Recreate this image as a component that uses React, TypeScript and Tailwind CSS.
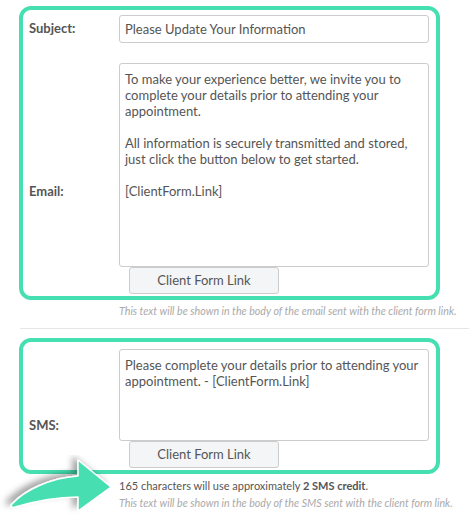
import React from "react";

const GREEN = "#46dfb1";

function FieldBox({ children, className }: { children: React.ReactNode; className?: string }) {
  return (
    <div className={"rounded-[3px] border border-[#cccccc] bg-white px-[5px] text-[13px] leading-[16px] text-[#555555] " + (className ?? "")}>
      {children}
    </div>
  );
}

function LinkButton() {
  return (
    <div className="ml-[10px] flex h-[27px] w-[150px] items-center justify-center rounded-[3px] border border-[#cccccc] bg-[#f4f5f7] text-[13px] text-[#555555]">
      Client Form Link
    </div>
  );
}

export default function App() {
  return (
    <div className="relative h-[530px] w-[469px] overflow-hidden bg-white font-['Lato','Liberation_Sans',sans-serif] text-[#555555]">
      <div className="pl-[19px] pt-[6px]">
        {/* Email box */}
        <div className="w-[421px] rounded-[12px] border-4 border-[#46dfb1] pb-[2px] pl-[6px] pr-[6px] pt-[5px]">
          <div className="flex items-center">
            <div className="w-[90px] text-[13px] font-bold">Subject:</div>
            <FieldBox className="flex h-[28px] w-[310px] items-center">Please Update Your Information</FieldBox>
          </div>
          <div className="mt-[20px] flex">
            <div className="w-[90px] pt-[119px] text-[13px] font-bold">Email:</div>
            <div className="flex flex-col">
              <FieldBox className="h-[204px] w-[310px] whitespace-pre-wrap pt-[7px]">
                {"To make your experience better, we invite you to complete your details prior to attending your appointment.\n\nAll information is securely transmitted and stored, just click the button below to get started.\n\n[ClientForm.Link]"}
              </FieldBox>
              <LinkButton />
            </div>
          </div>
        </div>
        <p className="ml-[100px] mt-[4px] text-[10.7px] italic leading-[14px] text-[#aaaaaa]">
          This text will be shown in the body of the email sent with the client form link.
        </p>
        <div className="ml-px mt-[10px] border-t border-[#e6e6e6]" />

        {/* SMS box */}
        <div className="mt-[9px] w-[421px] rounded-[12px] border-4 border-[#46dfb1] pb-[2px] pl-[6px] pr-[6px] pt-[7px]">
          <div className="flex">
            <div className="w-[90px] pt-[67px] text-[13px] font-bold">SMS:</div>
            <div className="flex flex-col">
              <FieldBox className="h-[92px] w-[310px] whitespace-pre-wrap pt-[7px]">
                {"Please complete your details prior to attending your appointment. - [ClientForm.Link]"}
              </FieldBox>
              <LinkButton />
            </div>
          </div>
        </div>
        <p className="ml-[100px] mt-[4px] text-[11px] leading-[15px] text-[#555555]">
          165 characters will use approximately <span className="font-bold">2 SMS credit</span>.
        </p>
        <p className="ml-[100px] mt-[3px] text-[10.7px] italic leading-[14px] text-[#aaaaaa]">
          This text will be shown in the body of the SMS sent with the client form link.
        </p>
      </div>

      {/* Arrow overlay */}
      <svg className="absolute left-0 top-[455px]" width="120" height="75" viewBox="0 0 120 75">
        <defs>
          <filter id="sh" x="-30%" y="-50%" width="160%" height="200%">
            <feDropShadow dx="-5" dy="-3" stdDeviation="3" floodColor="#000" floodOpacity="0.35" />
          </filter>
        </defs>
        <path
          d="M12,49 C25,35 50,23 78,21 L78,5 L111,32 L78,56 L78,42 C55,42 32,47 15,52 Q9,53 12,49 Z"
          fill={GREEN}
          stroke="#ffffff"
          strokeWidth="1.5"
          strokeLinejoin="round"
          filter="url(#sh)"
        />
      </svg>
    </div>
  );
}
